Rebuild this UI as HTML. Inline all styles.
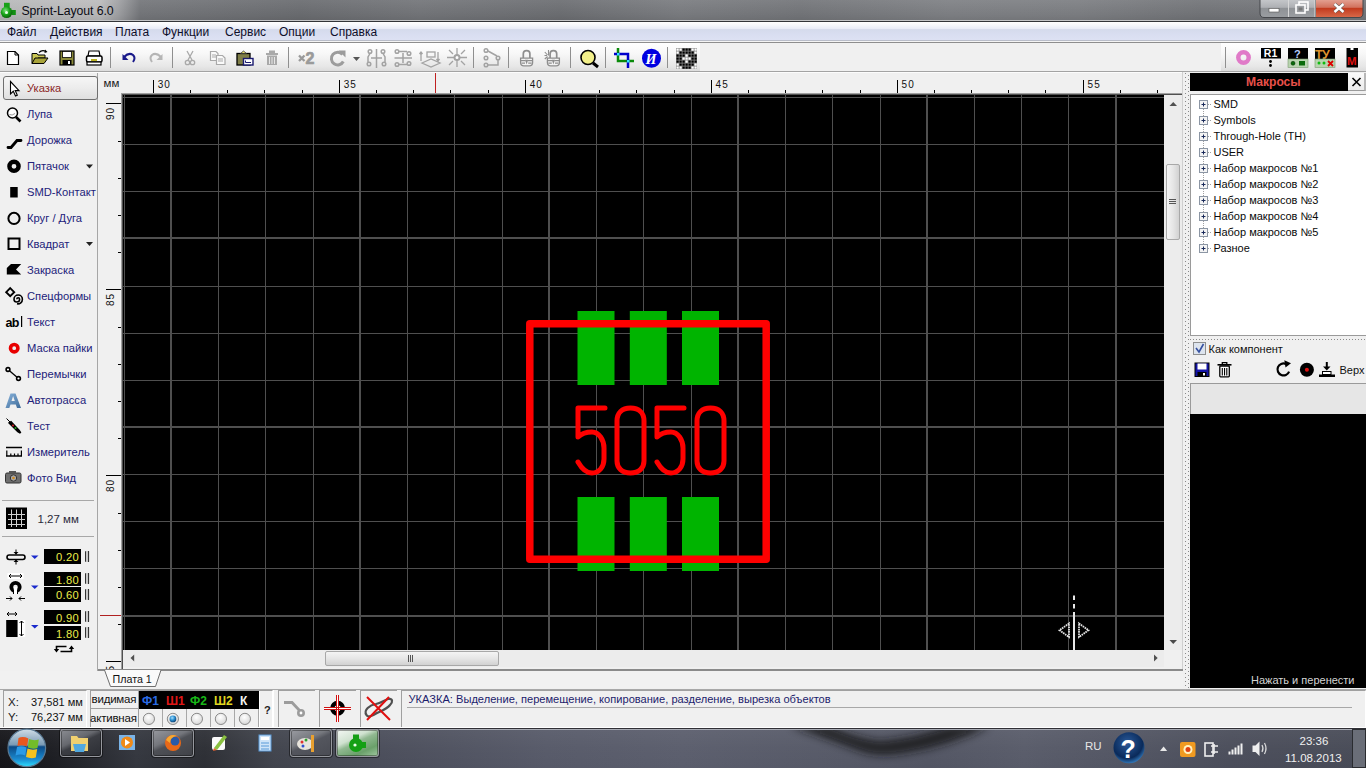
<!DOCTYPE html>
<html><head><meta charset="utf-8"><style>
*{box-sizing:border-box}
html,body{margin:0;padding:0}
body{width:1366px;height:768px;overflow:hidden;position:relative;background:#f0f0f0;font-family:"Liberation Sans",sans-serif;font-size:12px;color:#000}
.a{position:absolute}
svg{position:absolute;overflow:visible}
.t{position:absolute;white-space:nowrap;line-height:1}

#title{left:0;top:0;width:1366px;height:21px;background:linear-gradient(90deg,#b9babb 0,#bdbdbe 100px,#a2a3a6 118px,#76787c 140px,#6c6e72 300px,#75777b 420px,#6e7074 560px,#7c7e82 680px,#75777b 800px,#808286 950px,#7e8084 1080px,#74767a 1200px,#76787c 1366px)}
#menu{left:0;top:22px;width:1366px;height:18px;background:linear-gradient(#ffffff 0,#f4f6fb 20%,#e8ebf7 38%,#d5dbec 42%,#d9def1 70%,#dde1f3 100%)}
#menu .t{top:4.4px;font-size:12px;color:#0e0e2a}
.tbg{position:absolute;top:43px;height:28px;background:linear-gradient(#ffffff 0,#f7f7f7 40%,#e6e6e6 85%,#dcdcdc 100%)}
.sep{position:absolute;top:47px;width:1px;height:21px;background:#8f8f8f}

.lt{position:absolute;left:27px;font-size:11.2px;color:#22227a;white-space:nowrap;line-height:1}
.inp{position:absolute;left:44px;width:37px;height:14.5px;background:#000;color:#ecec4a;font-size:11.2px;text-align:right;padding-right:2px;line-height:17px;letter-spacing:0.3px}
.spin{position:absolute;left:85px;width:5px;height:11px;border-radius:1px;background:linear-gradient(90deg,#333 0,#333 1.5px,#c8c8c8 1.5px,#c8c8c8 3px,#333 3px,#333 4.5px,#ddd 4.5px)}

.rl{position:absolute;font-size:10px;color:#111;line-height:1;white-space:nowrap}

.ti{position:absolute;left:1213.5px;font-size:11px;color:#0a0a0a;white-space:nowrap;line-height:1}

.sb{position:absolute;border-top:1px solid #a0a0a0;border-left:1px solid #a0a0a0;border-right:1px solid #fff}
.tbb{position:absolute;top:729px;height:28px;border-radius:3px;border:1px solid #96989e;box-shadow:0 0 0 1px rgba(0,0,0,0.45),inset 0 0 0 1px rgba(0,0,0,0.35)}
</style></head><body>
<div class="a" id="title"></div><div class="a" style="left:0;top:0;width:1366px;height:21px;background:linear-gradient(rgba(255,255,255,0.06),rgba(0,0,0,0.04) 70%,rgba(0,0,0,0.1))"></div><div class="a" style="left:0;top:20px;width:1366px;height:1px;background:#c4c5c7"></div><div class="a" style="left:0;top:21px;width:1366px;height:1px;background:#333539"></div><svg width="20" height="20" style="left:0;top:0"><defs><radialGradient id="gi" cx="0.4" cy="0.35" r="0.7"><stop offset="0" stop-color="#7be07b"/><stop offset="0.5" stop-color="#18a418"/><stop offset="1" stop-color="#0a5a0a"/></radialGradient></defs><rect x="4" y="2.8" width="5.7" height="5" fill="#18a018"/><rect x="11.5" y="10" width="4.3" height="5" fill="#138f13"/><circle cx="6.6" cy="12.3" r="5.8" fill="url(#gi)"/><circle cx="6.5" cy="12.4" r="1.5" fill="#eaffea"/></svg><div class="t" style="left:21.5px;top:5px;font-size:12.3px;color:#0b0c14;letter-spacing:-0.1px">Sprint-Layout 6.0</div><svg width="106" height="19" style="left:1259px;top:0"><defs><linearGradient id="wb" x1="0" y1="0" x2="0" y2="1"><stop offset="0" stop-color="#c7c9cc"/><stop offset="0.45" stop-color="#aeb0b4"/><stop offset="0.5" stop-color="#8f9296"/><stop offset="1" stop-color="#9a9da1"/></linearGradient><linearGradient id="wc" x1="0" y1="0" x2="0" y2="1"><stop offset="0" stop-color="#e5a597"/><stop offset="0.45" stop-color="#d2725e"/><stop offset="0.5" stop-color="#c23a1e"/><stop offset="1" stop-color="#d96a4a"/></linearGradient></defs><path d="M1,-1 V13 Q1,17.5 5,17.5 H56.5 V-1 Z" fill="url(#wb)" stroke="#45474b" stroke-width="1"/><path d="M56.5,-1 V17.5 H100 Q104,17.5 104,13 V-1 Z" fill="url(#wc)" stroke="#45474b" stroke-width="1"/><path d="M29.5,0 V17" stroke="#d8d8d8" stroke-width="1"/><path d="M56,0 V17" stroke="#dddddd" stroke-width="1"/><rect x="10" y="8.5" width="10" height="3.5" fill="#fff" stroke="#555" stroke-width="0.6"/><rect x="40" y="2" width="9" height="8" fill="none" stroke="#fff" stroke-width="1.6"/><rect x="37" y="5" width="9" height="8" fill="#9a9da1" stroke="#fff" stroke-width="1.6"/><rect x="39.5" y="7.5" width="4" height="3" fill="#777"/><path d="M75.5,4 L84.5,12 M84.5,4 L75.5,12" stroke="#555" stroke-width="3.6"/><path d="M75.5,4 L84.5,12 M84.5,4 L75.5,12" stroke="#fff" stroke-width="2.4"/></svg><div class="a" id="menu"><span class="t" style="left:7px">Файл</span><span class="t" style="left:50px">Действия</span><span class="t" style="left:115px">Плата</span><span class="t" style="left:162px">Функции</span><span class="t" style="left:225px">Сервис</span><span class="t" style="left:279px">Опции</span><span class="t" style="left:330px">Справка</span></div><div class="a" style="left:0;top:40px;width:1366px;height:1px;background:#b9bdc9"></div><div class="a" style="left:0;top:41px;width:1366px;height:1px;background:#f4f4f4"></div><div class="a" style="left:0;top:42px;width:1366px;height:1px;background:#8e8e8e"></div><div class="a" style="left:0;top:71px;width:1366px;height:1px;background:#a3a3a3"></div><div class="tbg" style="left:0;width:700px"></div><div class="tbg" style="left:1221px;width:145px"></div><div class="sep" style="left:110px"></div><div class="sep" style="left:172px"></div><div class="sep" style="left:288px"></div><div class="sep" style="left:473px"></div><div class="sep" style="left:508px"></div><div class="sep" style="left:570px"></div><div class="sep" style="left:605px"></div><div class="sep" style="left:667px"></div><div class="sep" style="left:1225px"></div><svg width="1366" height="80" style="left:0;top:0"><path d="M7.5,51.5 H15 L18.5,55 V64.5 H7.5 Z" fill="#fff" stroke="#000" stroke-width="1.2"/><path d="M15,51.5 V55 H18.5" fill="none" stroke="#000" stroke-width="1"/><path d="M32,53.5 H37 L38,55 H45 V58 H38 L35,63.5 H32 Z" fill="#c9c653" stroke="#000" stroke-width="1"/><path d="M35,58 H48 L44,63.5 H32 Z" fill="#a8a33a" stroke="#000" stroke-width="1"/><path d="M39,52.5 Q42,49.5 46,51.5" fill="none" stroke="#000" stroke-width="1.2"/><path d="M45,49.5 L47.5,52 L44.5,53" fill="#000"/><rect x="60" y="51" width="14" height="14" fill="#8b8a3a" stroke="#000" stroke-width="1.2"/><rect x="62.5" y="51.5" width="9" height="6" fill="#fff" stroke="#000" stroke-width="0.8"/><rect x="62.5" y="60" width="9" height="5" fill="#000"/><rect x="68" y="61" width="2" height="3" fill="#fff"/><path d="M89,51 H99 L100,56 H88 Z" fill="#fff" stroke="#000" stroke-width="1.2"/><rect x="86.5" y="56" width="15.5" height="6" rx="1.5" fill="#fff" stroke="#000" stroke-width="1.5"/><rect x="87" y="62" width="14" height="3" fill="#fff" stroke="#000" stroke-width="1.2"/><rect x="91" y="59" width="6" height="2" fill="#b8b020"/><path d="M124,57 Q129,52 133,55 Q136,58 133,62" fill="none" stroke="#1a1a8a" stroke-width="2"/><path d="M122.5,54 L122.5,60 L128.5,60 Z" fill="#1a1a8a"/><path d="M161,57 Q156,52 152,55 Q149,58 152,62" fill="none" stroke="#b5b5b5" stroke-width="2"/><path d="M162.5,54 L162.5,60 L156.5,60 Z" fill="#b5b5b5"/><g stroke="#a9a9a9" stroke-width="1.3" fill="none"><path d="M187,51 L192,60 M193,51 L188,60"/><circle cx="187.5" cy="62.5" r="2.2"/><circle cx="192.5" cy="62.5" r="2.2"/></g><g fill="#fafafa" stroke="#a9a9a9" stroke-width="1.2"><path d="M210.5,51.5 H216 L218,53.5 V60.5 H210.5 Z"/><path d="M216.5,55.5 H222.5 L225,58 V64.5 H216.5 Z"/></g><g stroke="#a9a9a9" stroke-width="1"><path d="M212,55 H216 M212,57 H216 M218,59 H223 M218,61 H223"/></g><rect x="237" y="53.5" width="13" height="11.5" fill="#7f7e48" stroke="#000" stroke-width="1.3"/><path d="M240.5,53.5 L243.5,51 L246.5,53.5 Z" fill="#e8e070" stroke="#333" stroke-width="0.8"/><rect x="243.5" y="58.5" width="9.5" height="6.5" fill="#fff" stroke="#1a1a70" stroke-width="1.4"/><path d="M245.5,60.5 V62.5 H251" stroke="#1a1a70" stroke-width="1" fill="none"/><g fill="#a9a9a9"><rect x="266" y="53" width="12" height="2"/><rect x="269" y="50.5" width="6" height="2.5"/><rect x="267" y="55.5" width="10" height="9.5"/></g><g stroke="#e6e6e6" stroke-width="1"><path d="M269.5,57 V64 M272,57 V64 M274.5,57 V64"/></g><path d="M299,55.5 L304.5,61 M304.5,55.5 L299,61" stroke="#9a9a9a" stroke-width="2.3"/><text x="305.5" y="63.5" style="font-family:Liberation Sans;font-weight:bold;font-size:16px" fill="#9a9a9a" stroke="#9a9a9a" stroke-width="0.7">2</text><path d="M342.5,54.5 A6.3,6.3 0 1 0 343.3,61.5" fill="none" stroke="#9c9c9c" stroke-width="3"/><path d="M338.5,50.5 L345.5,50.5 L345.5,57.5 Z" fill="#9c9c9c"/><path d="M353,57 H360 L356.5,61 Z" fill="#555"/><g stroke="#a3a3a3" stroke-width="1.5" fill="none"><path d="M376.5,49 V68"/><circle cx="370" cy="51.5" r="1.8"/><circle cx="369" cy="64" r="1.8"/><circle cx="383" cy="51.5" r="1.8"/><circle cx="384" cy="64" r="1.8"/><path d="M370,53.5 L368,57 L368,62 M383,53.5 L385,57 L385,62 M371,58 H382"/></g><g stroke="#a3a3a3" stroke-width="1.5" fill="none"><path d="M394.5,58 H412"/><circle cx="397" cy="51.5" r="1.8"/><circle cx="409" cy="53.5" r="1.8"/><circle cx="397" cy="64.5" r="1.8"/><circle cx="409" cy="63.5" r="1.8"/><path d="M399,51.5 H407 M399,64.5 H407 M403,53 V63"/></g><g stroke="#a3a3a3" stroke-width="1.3" fill="none"><rect x="427" y="52" width="8" height="5"/><path d="M422,63 L431,59 L440,63 L431,67 Z M421,61 V52 M419.5,54 L421,52 L422.5,54 M438,52 V61 M436.5,59 L438,61 L439.5,59"/></g><g stroke="#a3a3a3" stroke-width="1.3" fill="none"><path d="M447,57.5 H467 M457,48 V67 M449,50 L453,54 M465,50 L461,54 M449,65 L453,61 M465,65 L461,61"/><circle cx="457" cy="57.5" r="2.5" fill="#fff" stroke-width="2"/></g><g stroke="#a3a3a3" stroke-width="1.5" fill="none"><circle cx="486" cy="50.5" r="1.8"/><circle cx="486" cy="58" r="1.8"/><circle cx="486" cy="65" r="1.8"/><circle cx="498" cy="58" r="1.8"/><path d="M488,51 L497,56 M498,60 V65 H488"/></g><g stroke="#8e8e8e" fill="none" transform="translate(0.0,0)"><path d="M523.3,58 V53.8 Q523.3,50.6 526.6,50.6 Q529.9,50.6 529.9,53.8 V58" stroke-width="1.7"/><path d="M520.6,58.2 H532.6 V62.5 Q532.6,65.8 529.3,65.8 H523.9 Q520.6,65.8 520.6,62.5 Z" stroke-width="1.3" fill="#f4f4f4"/><path d="M521,60.6 H525.5 M527.7,60.6 H532.2 M521.5,63.2 H525 M528.2,63.2 H531.7" stroke-width="1.2"/><path d="M525,59.8 H528.2 L526.6,64.5 Z" fill="#8e8e8e" stroke="none"/></g><g stroke="#8e8e8e" fill="none" transform="translate(26.8,0)"><path d="M523.3,58 V53.8 Q523.3,50.6 526.6,50.6 Q529.9,50.6 529.9,53.8 V58" stroke-width="1.7"/><path d="M520.6,58.2 H532.6 V62.5 Q532.6,65.8 529.3,65.8 H523.9 Q520.6,65.8 520.6,62.5 Z" stroke-width="1.3" fill="#f4f4f4"/><path d="M521,60.6 H525.5 M527.7,60.6 H532.2 M521.5,63.2 H525 M528.2,63.2 H531.7" stroke-width="1.2"/><path d="M525,59.8 H528.2 L526.6,64.5 Z" fill="#8e8e8e" stroke="none"/></g><path d="M548.5,50 V55.5 M544.8,52 L547.5,55 M544.8,59 L547.5,56.5 M544.5,55.5 H547" stroke="#8e8e8e" stroke-width="1.1"/><circle cx="588" cy="57.5" r="7" fill="#f3f08a" stroke="#000" stroke-width="1.6"/><path d="M593,63 L598,67" stroke="#000" stroke-width="3"/><g stroke-width="2.5"><path d="M618,48 V61 H634" stroke="#0a8a0a" fill="none"/><path d="M614,54 H628 V68" stroke="#0000cc" fill="none"/></g><rect x="617" y="53" width="2.5" height="2.5" fill="#33e6ff"/><rect x="627" y="60" width="2.5" height="2.5" fill="#33e6ff"/><circle cx="651.5" cy="58.3" r="9.5" fill="#0000e0"/><text x="645.5" y="63.5" font-family="Liberation Serif" font-weight="bold" font-style="italic" font-size="14" fill="#fff">И</text><rect x="676" y="48" width="21" height="21" fill="#888"/><rect x="676.5" y="48.5" width="2.2" height="2.2" fill="#fff"/><rect x="679.5" y="48.5" width="2.2" height="2.2" fill="#fff"/><rect x="682.5" y="48.5" width="2.2" height="2.2" fill="#000"/><rect x="685.5" y="48.5" width="2.2" height="2.2" fill="#000"/><rect x="688.5" y="48.5" width="2.2" height="2.2" fill="#000"/><rect x="691.5" y="48.5" width="2.2" height="2.2" fill="#fff"/><rect x="694.5" y="48.5" width="2.2" height="2.2" fill="#fff"/><rect x="676.5" y="51.5" width="2.2" height="2.2" fill="#fff"/><rect x="679.5" y="51.5" width="2.2" height="2.2" fill="#000"/><rect x="682.5" y="51.5" width="2.2" height="2.2" fill="#000"/><rect x="685.5" y="51.5" width="2.2" height="2.2" fill="#000"/><rect x="688.5" y="51.5" width="2.2" height="2.2" fill="#000"/><rect x="691.5" y="51.5" width="2.2" height="2.2" fill="#000"/><rect x="694.5" y="51.5" width="2.2" height="2.2" fill="#fff"/><rect x="676.5" y="54.5" width="2.2" height="2.2" fill="#000"/><rect x="679.5" y="54.5" width="2.2" height="2.2" fill="#000"/><rect x="682.5" y="54.5" width="2.2" height="2.2" fill="#000"/><rect x="685.5" y="54.5" width="2.2" height="2.2" fill="#fff"/><rect x="688.5" y="54.5" width="2.2" height="2.2" fill="#000"/><rect x="691.5" y="54.5" width="2.2" height="2.2" fill="#000"/><rect x="694.5" y="54.5" width="2.2" height="2.2" fill="#000"/><rect x="676.5" y="57.5" width="2.2" height="2.2" fill="#000"/><rect x="679.5" y="57.5" width="2.2" height="2.2" fill="#000"/><rect x="682.5" y="57.5" width="2.2" height="2.2" fill="#fff"/><rect x="685.5" y="57.5" width="2.2" height="2.2" fill="#fff"/><rect x="688.5" y="57.5" width="2.2" height="2.2" fill="#fff"/><rect x="691.5" y="57.5" width="2.2" height="2.2" fill="#000"/><rect x="694.5" y="57.5" width="2.2" height="2.2" fill="#000"/><rect x="676.5" y="60.5" width="2.2" height="2.2" fill="#000"/><rect x="679.5" y="60.5" width="2.2" height="2.2" fill="#000"/><rect x="682.5" y="60.5" width="2.2" height="2.2" fill="#000"/><rect x="685.5" y="60.5" width="2.2" height="2.2" fill="#fff"/><rect x="688.5" y="60.5" width="2.2" height="2.2" fill="#000"/><rect x="691.5" y="60.5" width="2.2" height="2.2" fill="#000"/><rect x="694.5" y="60.5" width="2.2" height="2.2" fill="#000"/><rect x="676.5" y="63.5" width="2.2" height="2.2" fill="#fff"/><rect x="679.5" y="63.5" width="2.2" height="2.2" fill="#000"/><rect x="682.5" y="63.5" width="2.2" height="2.2" fill="#000"/><rect x="685.5" y="63.5" width="2.2" height="2.2" fill="#000"/><rect x="688.5" y="63.5" width="2.2" height="2.2" fill="#000"/><rect x="691.5" y="63.5" width="2.2" height="2.2" fill="#000"/><rect x="694.5" y="63.5" width="2.2" height="2.2" fill="#fff"/><rect x="676.5" y="66.5" width="2.2" height="2.2" fill="#fff"/><rect x="679.5" y="66.5" width="2.2" height="2.2" fill="#fff"/><rect x="682.5" y="66.5" width="2.2" height="2.2" fill="#000"/><rect x="685.5" y="66.5" width="2.2" height="2.2" fill="#000"/><rect x="688.5" y="66.5" width="2.2" height="2.2" fill="#000"/><rect x="691.5" y="66.5" width="2.2" height="2.2" fill="#fff"/><rect x="694.5" y="66.5" width="2.2" height="2.2" fill="#fff"/><circle cx="1243.5" cy="57.5" r="5.2" fill="none" stroke="#e07ac8" stroke-width="4.5"/><rect x="1261" y="48" width="20" height="10.5" fill="#000"/><text x="1263.8" y="57" style="font-family:Liberation Sans;font-weight:bold;font-size:10.5px" fill="#fff">R1</text><circle cx="1270.5" cy="61.5" r="1.4" fill="#000"/><circle cx="1270.5" cy="65.5" r="1.4" fill="#000"/><rect x="1288" y="48" width="20" height="11" fill="#000"/><text x="1294" y="57.5" style="font-family:Liberation Sans;font-weight:bold;font-size:11px" fill="#b8cfff">?</text><rect x="1288" y="59" width="20" height="8.5" fill="#b9d4b0" stroke="#7a9a70" stroke-width="0.6"/><circle cx="1293" cy="63.3" r="2" fill="#0a6a0a" stroke="#003300" stroke-width="0.5"/><rect x="1299" y="61" width="6" height="4.5" fill="#0a6a0a"/><rect x="1315" y="48" width="20" height="11" fill="#000"/><text x="1315" y="58.8" style="font-family:Liberation Sans;font-weight:bold;font-size:12.5px;letter-spacing:-0.6px" fill="#dc922e">ТУ</text><rect x="1315" y="59" width="20" height="8.5" fill="#b9d4b0" stroke="#7a9a70" stroke-width="0.6"/><circle cx="1319" cy="63" r="1.5" fill="#11bb11"/><circle cx="1324" cy="63" r="1.5" fill="#11bb11"/><path d="M1328,61 L1333,66 M1333,61 L1328,66" stroke="#dd0000" stroke-width="1.8"/><rect x="1346.5" y="48" width="11.5" height="19.5" fill="#000"/><rect x="1350.5" y="48" width="3" height="2" fill="#fff"/><text x="1347" y="65" style="font-family:Liberation Sans;font-weight:bold;font-size:11.5px" fill="#e01010">M</text></svg><div class="a" style="left:97px;top:72px;width:1px;height:616px;background:#a6a6a6"></div><div class="a" style="left:3px;top:76px;width:95px;height:24px;border:1px solid #6f6f6f;border-radius:3px;background:linear-gradient(#f6f6f6,#ececec 50%,#dfdfdf)"></div><div class="lt" style="top:82.9px;color:#8a2626">Указка</div><div class="lt" style="top:108.9px;color:#22227a">Лупа</div><div class="lt" style="top:134.9px;color:#22227a">Дорожка</div><div class="lt" style="top:160.9px;color:#22227a">Пятачок</div><div class="lt" style="top:186.9px;color:#22227a">SMD-Контакт</div><div class="lt" style="top:212.9px;color:#22227a">Круг / Дуга</div><div class="lt" style="top:238.9px;color:#22227a">Квадрат</div><div class="lt" style="top:264.9px;color:#22227a">Закраска</div><div class="lt" style="top:290.9px;color:#22227a">Спецформы</div><div class="lt" style="top:316.9px;color:#22227a">Текст</div><div class="lt" style="top:342.9px;color:#22227a">Маска пайки</div><div class="lt" style="top:368.9px;color:#22227a">Перемычки</div><div class="lt" style="top:394.9px;color:#22227a">Автотрасса</div><div class="lt" style="top:420.9px;color:#22227a">Тест</div><div class="lt" style="top:446.9px;color:#22227a">Измеритель</div><div class="lt" style="top:472.9px;color:#22227a">Фото Вид</div><div class="a" style="left:2px;top:500px;width:92px;height:1px;background:#a8a8a8"></div><div class="a" style="left:2px;top:536px;width:92px;height:1px;background:#a8a8a8"></div><div class="t" style="left:37.5px;top:513.5px;font-size:11.5px;color:#2a2a3a">1,27 мм</div><svg width="100" height="700" style="left:0;top:0"><path d="M10.5,81.5 V94 L13.3,91.3 L15.5,96 L17.3,95.2 L15.2,90.6 L19,90.6 Z" fill="#fff" stroke="#000" stroke-width="1.1" stroke-linejoin="miter"/><circle cx="12.5" cy="113" r="5" fill="#fff" stroke="#000" stroke-width="1.5"/><path d="M9.5,114.5 Q12,116 15,113.5" stroke="#999" stroke-width="1" fill="none"/><path d="M16,117 L20.5,121.5" stroke="#000" stroke-width="2.6"/><path d="M8,147.5 H11 L17,140.5 H21" stroke="#000" stroke-width="2.8" fill="none" stroke-linecap="round"/><circle cx="14" cy="166.3" r="4.6" fill="none" stroke="#000" stroke-width="4.4"/><path d="M86,164.5 H93 L89.5,168.5 Z" fill="#222"/><rect x="10.2" y="187" width="7.5" height="10.5" fill="#000"/><circle cx="14" cy="218.4" r="5.6" fill="none" stroke="#000" stroke-width="2"/><rect x="8.5" y="238.5" width="11" height="10.5" fill="none" stroke="#000" stroke-width="2"/><path d="M86,242 H93 L89.5,246 Z" fill="#222"/><path d="M11,264 H21.2 L16,269.5 L21.2,274.5 H6.8 V268 Z" fill="#000"/><path d="M10.2,288.2 L14.2,292.2 L10.2,296.2 L6.2,292.2 Z" fill="none" stroke="#000" stroke-width="1.9"/><path d="M16.8,299.2 A1.4,1.4 0 0 1 19.6,299.2 A2.8,2.8 0 0 1 14,299.2 A4.2,4.2 0 0 1 22.4,299.2 A4.6,4.6 0 0 1 17,303.8" fill="none" stroke="#000" stroke-width="1.6"/><text x="5.5" y="326.5" font-family="Liberation Sans" font-weight="bold"  font-size="12.5" fill="#000" letter-spacing="-0.6">ab</text><rect x="21" y="316" width="1.2" height="11" fill="#000"/><circle cx="14.2" cy="348.2" r="3.7" fill="none" stroke="#e80000" stroke-width="3.6"/><path d="M8,369.5 L18.5,378.5" stroke="#000" stroke-width="1.3"/><circle cx="8" cy="369.5" r="1.9" fill="#fff" stroke="#000" stroke-width="1.6"/><circle cx="18.5" cy="378.5" r="1.9" fill="#fff" stroke="#000" stroke-width="1.6"/><defs><linearGradient id="ag" x1="0" y1="0" x2="1" y2="1"><stop offset="0" stop-color="#8ab4dc"/><stop offset="1" stop-color="#3d6a98"/></linearGradient></defs><path d="M10.5,393.5 H15.5 L21,408 H17 L15.8,404.5 H10.5 L9.3,408 H5.5 Z M11.5,401 H14.8 L13.1,396 Z" fill="url(#ag)" fill-rule="evenodd"/><path d="M6.5,418.5 L21,433" stroke="#000" stroke-width="1"/><path d="M9.5,423 L18,431.5 L20.5,433 L19,430.5 L11,422 Z" fill="#000" stroke="#000" stroke-width="2"/><circle cx="13" cy="425.5" r="1" fill="#e02020"/><circle cx="15.5" cy="428" r="1" fill="#20b020"/><path d="M6,447.5 H22 M6,456 H22" stroke="#000" stroke-width="1.3"/><path d="M6.8,456 V450.5 M10.8,456 V453.5 M14.5,456 V453.5 M18,456 V453.5 M21.4,456 V450.5" stroke="#000" stroke-width="1.2"/><rect x="5.5" y="473" width="15.5" height="10" rx="1.5" fill="#6e6e6e" stroke="#333" stroke-width="1"/><rect x="9" y="471" width="7" height="2.5" fill="#555"/><circle cx="13.5" cy="478" r="3.2" fill="#a8a8a8" stroke="#333" stroke-width="1"/><circle cx="13.5" cy="478" r="1.3" fill="#d08a20"/><rect x="6" y="507.5" width="21" height="21.5" fill="#000"/><path d="M8,514.5 H25 M8,519.5 H25 M8,524.5 H25 M11.5,509.5 V527 M16.5,509.5 V527 M21.5,509.5 V527" stroke="#d0d0d0" stroke-width="1"/><rect x="7" y="555" width="18" height="4.5" rx="2.2" fill="none" stroke="#000" stroke-width="1.6"/><path d="M16,549.5 V554.5 M16,559.5 V564.5" stroke="#000" stroke-width="1"/><path d="M13.5,552 L16,554.5 L18.5,552 Z M13.5,562 L16,559.5 L18.5,562 Z" fill="#000"/><rect x="7.5" y="573" width="16" height="6" fill="#fff"/><path d="M9,576 H22" stroke="#000" stroke-width="1"/><path d="M11,574 L9,576 L11,578 M20,574 L22,576 L20,578" stroke="#000" stroke-width="1" fill="none"/><circle cx="15.5" cy="587" r="4.2" fill="none" stroke="#000" stroke-width="3.8"/><rect x="13.8" y="587" width="3.4" height="7" fill="#fff"/><rect x="13" y="590" width="1" height="4" fill="#000"/><rect x="17" y="590" width="1" height="4" fill="#000"/><path d="M6,598.5 H12 M19,598.5 H25" stroke="#000" stroke-width="1"/><path d="M10,596.5 L12,598.5 L10,600.5 M21,596.5 L19,598.5 L21,600.5" stroke="#000" stroke-width="1" fill="none"/><path d="M7,614 H17 M9,612 L7,614 L9,616 M15,612 L17,614 L15,616" stroke="#000" stroke-width="1" fill="none"/><rect x="6.2" y="620" width="11.5" height="17" fill="#000"/><rect x="17.8" y="620" width="7.5" height="17" fill="#fff"/><path d="M21.5,621 V636 M19.5,623 L21.5,621 L23.5,623 M19.5,634 L21.5,636 L23.5,634" stroke="#000" stroke-width="1" fill="none"/><path d="M31,555.5 H38.5 L34.75,559.0 Z" fill="#1a2acc"/><path d="M31,585.5 H38.5 L34.75,589.0 Z" fill="#1a2acc"/><path d="M31,625.0 H38.5 L34.75,628.5 Z" fill="#1a2acc"/><path d="M66.5,646.5 H56.5 V649.5 M60.5,651.5 H71.5 V648.5" stroke="#000" stroke-width="1.6" fill="none"/><path d="M53.8,649 H59.2 L56.5,652.5 Z M68.8,649 H74.2 L71.5,645.5 Z" fill="#000"/></svg><div class="inp" style="top:549.3px">0.20</div><div class="spin" style="top:550.8px"></div><div class="inp" style="top:571.5px">1.80</div><div class="spin" style="top:573.0px"></div><div class="inp" style="top:587.4px">0.60</div><div class="spin" style="top:588.9px"></div><div class="inp" style="top:609.5px">0.90</div><div class="spin" style="top:611.0px"></div><div class="inp" style="top:625.7px">1.80</div><div class="spin" style="top:627.2px"></div><div class="a" style="left:98px;top:72px;width:1085px;height:598px;background:#f0f0f0"></div><div class="a" style="left:0;top:72px;width:1183px;height:1px;background:#fcfcfc"></div><div class="a" style="left:98px;top:669px;width:1085px;height:2px;background:#8a8a8a"></div><div class="a" style="left:1182px;top:72px;width:1px;height:598px;background:#d0d0d0"></div><div class="a" style="left:121px;top:93px;width:1px;height:576px;background:#a0a0a0"></div><div class="a" style="left:122px;top:93px;width:1px;height:576px;background:#505050"></div><div class="a" style="left:121px;top:93px;width:1061px;height:1px;background:#a0a0a0"></div><div class="a" style="left:122px;top:94px;width:1060px;height:1px;background:#505050"></div><div class="a" style="left:123px;top:95px;width:1041px;height:555px;background:#000"></div><svg width="1366" height="768" viewBox="0 0 1366 768" style="left:0;top:0"><rect x="124" y="95" width="1" height="555" fill="#4f4f4f"/><rect x="170" y="95" width="2" height="555" fill="#4f4f4f"/><rect x="218" y="95" width="1" height="555" fill="#4f4f4f"/><rect x="265" y="95" width="1" height="555" fill="#4f4f4f"/><rect x="313" y="95" width="1" height="555" fill="#4f4f4f"/><rect x="359" y="95" width="2" height="555" fill="#4f4f4f"/><rect x="407" y="95" width="1" height="555" fill="#4f4f4f"/><rect x="454" y="95" width="1" height="555" fill="#4f4f4f"/><rect x="502" y="95" width="1" height="555" fill="#4f4f4f"/><rect x="548" y="95" width="2" height="555" fill="#4f4f4f"/><rect x="596" y="95" width="1" height="555" fill="#4f4f4f"/><rect x="643" y="95" width="1" height="555" fill="#4f4f4f"/><rect x="691" y="95" width="1" height="555" fill="#4f4f4f"/><rect x="737" y="95" width="2" height="555" fill="#4f4f4f"/><rect x="785" y="95" width="1" height="555" fill="#4f4f4f"/><rect x="832" y="95" width="1" height="555" fill="#4f4f4f"/><rect x="880" y="95" width="1" height="555" fill="#4f4f4f"/><rect x="926" y="95" width="2" height="555" fill="#4f4f4f"/><rect x="974" y="95" width="1" height="555" fill="#4f4f4f"/><rect x="1021" y="95" width="1" height="555" fill="#4f4f4f"/><rect x="1068" y="95" width="1" height="555" fill="#4f4f4f"/><rect x="1115" y="95" width="2" height="555" fill="#4f4f4f"/><rect x="123" y="97" width="1041" height="1" fill="#4f4f4f"/><rect x="123" y="144" width="1041" height="1" fill="#4f4f4f"/><rect x="123" y="191" width="1041" height="1" fill="#4f4f4f"/><rect x="123" y="237" width="1041" height="2" fill="#4f4f4f"/><rect x="123" y="286" width="1041" height="1" fill="#4f4f4f"/><rect x="123" y="333" width="1041" height="1" fill="#4f4f4f"/><rect x="123" y="380" width="1041" height="1" fill="#4f4f4f"/><rect x="123" y="426" width="1041" height="2" fill="#4f4f4f"/><rect x="123" y="474" width="1041" height="1" fill="#4f4f4f"/><rect x="123" y="521" width="1041" height="1" fill="#4f4f4f"/><rect x="123" y="568" width="1041" height="1" fill="#4f4f4f"/><rect x="123" y="615" width="1041" height="2" fill="#4f4f4f"/><rect x="577.5" y="311" width="37" height="74" fill="#00b400"/><rect x="577.5" y="497" width="37" height="74" fill="#00b400"/><rect x="629.8" y="311" width="37" height="74" fill="#00b400"/><rect x="629.8" y="497" width="37" height="74" fill="#00b400"/><rect x="682.0" y="311" width="37" height="74" fill="#00b400"/><rect x="682.0" y="497" width="37" height="74" fill="#00b400"/><rect x="529.8" y="323.7" width="236.4" height="235.5" fill="none" stroke="#ff0000" stroke-width="7.5" stroke-linejoin="round"/><path d="M605,408 H578 V437 C582,433 586,432 592,432 C599,432 604,440 604,448 V459 C604,467 599,473 592,473 C586,473 582,469 578,462 M617,421 C617,413 622,408 630.5,408 C639,408 644,413 644,421 V461 C644,468 639,473 630.5,473 C622,473 617,468 617,461 Z M684,408 H657 V437 C661,433 665,432 671,432 C678,432 683,440 683,448 V459 C683,467 678,473 671,473 C665,473 661,469 657,462 M697,421 C697,413 702,408 710.5,408 C719,408 724,413 724,421 V461 C724,468 719,473 710.5,473 C702,473 697,468 697,461 Z" fill="none" stroke="#ff0000" stroke-width="5" stroke-linecap="round" stroke-linejoin="round"/><rect x="1073" y="595.5" width="2" height="4.5" fill="#e8e8e8"/><rect x="1073" y="604" width="2" height="4.5" fill="#e8e8e8"/><rect x="1073" y="612" width="2" height="38" fill="#e8e8e8"/><path d="M1069,623.5 L1059.5,630.2 L1069,637 Z M1079,623.5 L1088.5,630.2 L1079,637 Z" fill="none" stroke="#e4e4e4" stroke-width="1.8" stroke-dasharray="1.6,0.7"/></svg><svg width="1366" height="768" viewBox="0 0 1366 768" style="left:0;top:0"><rect x="153" y="80" width="1" height="13" fill="#000"/><rect x="190" y="90" width="1" height="3" fill="#000"/><rect x="227" y="90" width="1" height="3" fill="#000"/><rect x="264" y="90" width="1" height="3" fill="#000"/><rect x="302" y="90" width="1" height="3" fill="#000"/><rect x="339" y="80" width="1" height="13" fill="#000"/><rect x="376" y="90" width="1" height="3" fill="#000"/><rect x="413" y="90" width="1" height="3" fill="#000"/><rect x="450" y="90" width="1" height="3" fill="#000"/><rect x="488" y="90" width="1" height="3" fill="#000"/><rect x="525" y="80" width="1" height="13" fill="#000"/><rect x="562" y="90" width="1" height="3" fill="#000"/><rect x="599" y="90" width="1" height="3" fill="#000"/><rect x="636" y="90" width="1" height="3" fill="#000"/><rect x="674" y="90" width="1" height="3" fill="#000"/><rect x="711" y="80" width="1" height="13" fill="#000"/><rect x="748" y="90" width="1" height="3" fill="#000"/><rect x="785" y="90" width="1" height="3" fill="#000"/><rect x="822" y="90" width="1" height="3" fill="#000"/><rect x="860" y="90" width="1" height="3" fill="#000"/><rect x="897" y="80" width="1" height="13" fill="#000"/><rect x="934" y="90" width="1" height="3" fill="#000"/><rect x="971" y="90" width="1" height="3" fill="#000"/><rect x="1008" y="90" width="1" height="3" fill="#000"/><rect x="1045" y="90" width="1" height="3" fill="#000"/><rect x="1083" y="80" width="1" height="13" fill="#000"/><rect x="1120" y="90" width="1" height="3" fill="#000"/><rect x="1157" y="90" width="1" height="3" fill="#000"/><rect x="106" y="103" width="15" height="1" fill="#000"/><rect x="118" y="141" width="3" height="1" fill="#000"/><rect x="118" y="178" width="3" height="1" fill="#000"/><rect x="118" y="215" width="3" height="1" fill="#000"/><rect x="118" y="252" width="3" height="1" fill="#000"/><rect x="106" y="289" width="15" height="1" fill="#000"/><rect x="118" y="327" width="3" height="1" fill="#000"/><rect x="118" y="364" width="3" height="1" fill="#000"/><rect x="118" y="401" width="3" height="1" fill="#000"/><rect x="118" y="438" width="3" height="1" fill="#000"/><rect x="106" y="475" width="15" height="1" fill="#000"/><rect x="118" y="513" width="3" height="1" fill="#000"/><rect x="118" y="550" width="3" height="1" fill="#000"/><rect x="118" y="587" width="3" height="1" fill="#000"/><rect x="118" y="624" width="3" height="1" fill="#000"/><rect x="106" y="661" width="15" height="1" fill="#000"/><rect x="435" y="73" width="1" height="20" fill="#c02020"/><rect x="100" y="615" width="21" height="1" fill="#b02020"/></svg><div class="rl" style="left:103.5px;top:78.3px;font-size:11.5px;letter-spacing:0.1px;color:#1a1a22">мм</div><div class="rl" style="left:157.8px;top:80.2px;letter-spacing:1px">30</div><div class="rl" style="left:343.8px;top:80.2px;letter-spacing:1px">35</div><div class="rl" style="left:529.7px;top:80.2px;letter-spacing:1px">40</div><div class="rl" style="left:715.6px;top:80.2px;letter-spacing:1px">45</div><div class="rl" style="left:901.6px;top:80.2px;letter-spacing:1px">50</div><div class="rl" style="left:1087.6px;top:80.2px;letter-spacing:1px">55</div><div class="rl" style="left:106.0px;top:119.9px;transform:rotate(-90deg);transform-origin:0 0;letter-spacing:1px">90</div><div class="rl" style="left:106.0px;top:305.9px;transform:rotate(-90deg);transform-origin:0 0;letter-spacing:1px">85</div><div class="rl" style="left:106.0px;top:491.9px;transform:rotate(-90deg);transform-origin:0 0;letter-spacing:1px">80</div><div class="rl" style="left:106.0px;top:677.9px;transform:rotate(-90deg);transform-origin:0 0;letter-spacing:1px">75</div><div class="a" style="left:98px;top:669px;width:1085px;height:2px;background:#8a8a8a"></div><div class="a" style="left:1164px;top:95px;width:18px;height:555px;background:#ececec"></div><div class="a" style="left:123px;top:650px;width:1041px;height:17px;background:#ececec"></div><div class="a" style="left:1164px;top:650px;width:18px;height:17px;background:#f0f0f0"></div><div class="a" style="left:1166px;top:164px;width:14px;height:76px;border:1px solid #a8a8a8;border-radius:2px;background:linear-gradient(90deg,#f4f4f4,#e6e6e6 50%,#d2d2d2)"></div><div class="a" style="left:325px;top:651px;width:174px;height:15px;border:1px solid #a8a8a8;border-radius:2px;background:linear-gradient(#f4f4f4,#e6e6e6 50%,#d2d2d2)"></div><svg width="1366" height="768" viewBox="0 0 1366 768" style="left:0;top:0"><path d="M1169.5,106 L1173.25,102 L1177,106 Z" fill="#505050"/><path d="M1169.5,640 H1177 L1173.25,644 Z" fill="#4a4a4a"/><path d="M130.5,658 L134.2,654.6 V661.4 Z" fill="#505050"/><path d="M1157.7,658 L1154,654.6 V661.4 Z" fill="#505050"/><path d="M1169,199.5 H1176 M1169,201.5 H1176 M1169,203.5 H1176" stroke="#555" stroke-width="1"/><path d="M408.5,655 V662 M410.5,655 V662 M412.5,655 V662" stroke="#555" stroke-width="1"/></svg><div class="a" style="left:0;top:671px;width:1183px;height:17px;background:#f1f1f1"></div><svg width="200" height="30" viewBox="95 665 200 30" style="left:95px;top:665px"><path d="M104.5,670 L110.5,686.5 H155.5 L161,670" fill="#fafafa" stroke="#6e6e6e" stroke-width="1"/></svg><div class="t" style="left:112.5px;top:673.8px;font-size:10.7px;color:#111">Плата 1</div><div class="a" style="left:1183px;top:72px;width:7px;height:616px;background:#f0f0f0"></div><div class="a" style="left:1185px;top:73px;width:1px;height:615px;background:repeating-linear-gradient(#8a8a8a 0,#8a8a8a 1px,transparent 1px,transparent 4px)"></div><div class="a" style="left:1188px;top:75px;width:1px;height:613px;background:repeating-linear-gradient(#8a8a8a 0,#8a8a8a 1px,transparent 1px,transparent 4px)"></div><div class="a" style="left:1190px;top:73px;width:176px;height:18px;background:#000"></div><div class="t" style="left:1246px;top:76px;font-size:12.1px;font-weight:bold;color:#e8504a">Макросы</div><div class="a" style="left:1348px;top:73px;width:18px;height:18px;background:linear-gradient(#fafafa,#ececec);border-right:2px solid #b8b8b8;border-bottom:1px solid #9a9a9a"></div><svg width="20" height="20" style="left:1348px;top:73px"><path d="M4.5,5 L12.5,13 M12.5,5 L4.5,13" stroke="#000" stroke-width="1.6"/></svg><div class="a" style="left:1190px;top:94px;width:176px;height:242px;background:#fff;border:1px solid #9a9a9a;border-right:none"></div><div class="ti" style="top:99.0px">SMD</div><div class="ti" style="top:115.0px">Symbols</div><div class="ti" style="top:131.0px">Through-Hole (TH)</div><div class="ti" style="top:147.0px">USER</div><div class="ti" style="top:163.0px">Набор макросов №1</div><div class="ti" style="top:179.0px">Набор макросов №2</div><div class="ti" style="top:195.0px">Набор макросов №3</div><div class="ti" style="top:211.0px">Набор макросов №4</div><div class="ti" style="top:227.0px">Набор макросов №5</div><div class="ti" style="top:243.0px">Разное</div><svg width="1366" height="768" viewBox="0 0 1366 768" style="left:0;top:0"><path d="M1203.5,109 V245" stroke="#a0a0a0" stroke-width="1" stroke-dasharray="1,1"/><rect x="1199.5" y="100.5" width="8" height="8" fill="#f4f4f4" stroke="#8c96a4" stroke-width="1"/><path d="M1201.5,104.5 H1205.5 M1203.5,102.5 V106.5" stroke="#1a2a5a" stroke-width="1"/><path d="M1208,104.5 H1212" stroke="#a0a0a0" stroke-width="1" stroke-dasharray="1,1"/><rect x="1199.5" y="116.5" width="8" height="8" fill="#f4f4f4" stroke="#8c96a4" stroke-width="1"/><path d="M1201.5,120.5 H1205.5 M1203.5,118.5 V122.5" stroke="#1a2a5a" stroke-width="1"/><path d="M1208,120.5 H1212" stroke="#a0a0a0" stroke-width="1" stroke-dasharray="1,1"/><rect x="1199.5" y="132.5" width="8" height="8" fill="#f4f4f4" stroke="#8c96a4" stroke-width="1"/><path d="M1201.5,136.5 H1205.5 M1203.5,134.5 V138.5" stroke="#1a2a5a" stroke-width="1"/><path d="M1208,136.5 H1212" stroke="#a0a0a0" stroke-width="1" stroke-dasharray="1,1"/><rect x="1199.5" y="148.5" width="8" height="8" fill="#f4f4f4" stroke="#8c96a4" stroke-width="1"/><path d="M1201.5,152.5 H1205.5 M1203.5,150.5 V154.5" stroke="#1a2a5a" stroke-width="1"/><path d="M1208,152.5 H1212" stroke="#a0a0a0" stroke-width="1" stroke-dasharray="1,1"/><rect x="1199.5" y="164.5" width="8" height="8" fill="#f4f4f4" stroke="#8c96a4" stroke-width="1"/><path d="M1201.5,168.5 H1205.5 M1203.5,166.5 V170.5" stroke="#1a2a5a" stroke-width="1"/><path d="M1208,168.5 H1212" stroke="#a0a0a0" stroke-width="1" stroke-dasharray="1,1"/><rect x="1199.5" y="180.5" width="8" height="8" fill="#f4f4f4" stroke="#8c96a4" stroke-width="1"/><path d="M1201.5,184.5 H1205.5 M1203.5,182.5 V186.5" stroke="#1a2a5a" stroke-width="1"/><path d="M1208,184.5 H1212" stroke="#a0a0a0" stroke-width="1" stroke-dasharray="1,1"/><rect x="1199.5" y="196.5" width="8" height="8" fill="#f4f4f4" stroke="#8c96a4" stroke-width="1"/><path d="M1201.5,200.5 H1205.5 M1203.5,198.5 V202.5" stroke="#1a2a5a" stroke-width="1"/><path d="M1208,200.5 H1212" stroke="#a0a0a0" stroke-width="1" stroke-dasharray="1,1"/><rect x="1199.5" y="212.5" width="8" height="8" fill="#f4f4f4" stroke="#8c96a4" stroke-width="1"/><path d="M1201.5,216.5 H1205.5 M1203.5,214.5 V218.5" stroke="#1a2a5a" stroke-width="1"/><path d="M1208,216.5 H1212" stroke="#a0a0a0" stroke-width="1" stroke-dasharray="1,1"/><rect x="1199.5" y="228.5" width="8" height="8" fill="#f4f4f4" stroke="#8c96a4" stroke-width="1"/><path d="M1201.5,232.5 H1205.5 M1203.5,230.5 V234.5" stroke="#1a2a5a" stroke-width="1"/><path d="M1208,232.5 H1212" stroke="#a0a0a0" stroke-width="1" stroke-dasharray="1,1"/><rect x="1199.5" y="244.5" width="8" height="8" fill="#f4f4f4" stroke="#8c96a4" stroke-width="1"/><path d="M1201.5,248.5 H1205.5 M1203.5,246.5 V250.5" stroke="#1a2a5a" stroke-width="1"/><path d="M1208,248.5 H1212" stroke="#a0a0a0" stroke-width="1" stroke-dasharray="1,1"/><path d="M1190,339.5 H1366" stroke="#8a8a8a" stroke-width="1" stroke-dasharray="1,2"/><rect x="1193.5" y="342.5" width="12" height="12" fill="#dde4ee" stroke="#8e8f8f" stroke-width="1"/><path d="M1196,348 L1199,352 L1203.5,344" stroke="#3550a0" stroke-width="1.6" fill="none"/><rect x="1195" y="363" width="14" height="13.5" fill="#1414a8" stroke="#000" stroke-width="1"/><rect x="1197.5" y="363.5" width="9" height="6" fill="#fff"/><rect x="1197.5" y="372" width="9" height="4.5" fill="#000"/><rect x="1203" y="373" width="2" height="2.5" fill="#fff"/><g fill="#fff" stroke="#000" stroke-width="1.3"><rect x="1219.8" y="366" width="9.5" height="10.8" rx="0.8"/><path d="M1217.5,364.8 H1231.5" fill="none" stroke-width="1.6"/><path d="M1222.3,364.5 V362.6 H1226.8 V364.5" fill="none"/></g><path d="M1222.3,368 V375.5 M1224.55,368 V375.5 M1226.8,368 V375.5" stroke="#000" stroke-width="1.1"/><path d="M1289.1,371.6 A6,6 0 1 1 1285.8,363.9" fill="none" stroke="#000" stroke-width="2.2"/><path d="M1284.3,360.3 L1291,363.2 L1285.5,367.6 Z" fill="#000"/><circle cx="1306.9" cy="369.8" r="7" fill="#000"/><circle cx="1306.9" cy="369.8" r="2" fill="#e01010"/><path d="M1326.8,362 V368.5" stroke="#000" stroke-width="2"/><path d="M1323,366.5 H1330.5 L1326.8,370.5 Z" fill="#000"/><rect x="1322.5" y="371.5" width="8.5" height="3" fill="#fff" stroke="#000" stroke-width="1"/><rect x="1319" y="374.5" width="16" height="2.5" fill="#000"/></svg><div class="t" style="left:1208.5px;top:343.5px;font-size:11px;color:#111">Как компонент</div><div class="t" style="left:1339.5px;top:364.5px;font-size:11px;color:#111">Верх</div><div class="a" style="left:1190px;top:383px;width:176px;height:31px;background:#e6e6e6;border-top:1px solid #9a9a9a;border-left:1px solid #9a9a9a"></div><div class="a" style="left:1190px;top:414px;width:176px;height:274px;background:#000"></div><div class="t" style="left:1251px;top:675px;font-size:11px;color:#d4d4d4">Нажать и перенести</div><div class="a" style="left:0;top:688px;width:1366px;height:40px;background:#f0f0f0"></div><div class="a" style="left:0;top:689px;width:1366px;height:1px;background:#a8a8a8"></div><div class="sb" style="left:3px;top:690px;width:84px;height:38px"></div><div class="t" style="left:8px;top:697px;font-size:11.5px;color:#222">X:</div><div class="t" style="left:8px;top:712px;font-size:11.5px;color:#222">Y:</div><div class="t" style="left:31px;top:697.3px;font-size:11px;color:#111">37,581 мм</div><div class="t" style="left:31px;top:712.3px;font-size:11px;color:#111">76,237 мм</div><div class="sb" style="left:90px;top:690px;width:183px;height:38px"></div><div class="a" style="left:139px;top:691px;width:120px;height:17.5px;background:#000"></div><div class="a" style="left:91px;top:708px;width:48px;height:1px;background:#a0a0a0"></div><div class="a" style="left:138px;top:691px;width:1px;height:37px;background:#a0a0a0"></div><div class="a" style="left:162px;top:709px;width:1px;height:19px;background:#a8a8a8"></div><div class="a" style="left:186px;top:709px;width:1px;height:19px;background:#a8a8a8"></div><div class="a" style="left:210px;top:709px;width:1px;height:19px;background:#a8a8a8"></div><div class="a" style="left:234px;top:709px;width:1px;height:19px;background:#a8a8a8"></div><div class="a" style="left:258px;top:709px;width:1px;height:19px;background:#a8a8a8"></div><div class="a" style="left:259px;top:691px;width:1px;height:37px;background:#fff"></div><div class="t" style="left:91.5px;top:694px;font-size:11.5px;color:#111;letter-spacing:-0.2px">видимая</div><div class="t" style="left:90px;top:713px;font-size:11.5px;color:#111;letter-spacing:-0.2px">активная</div><div class="t" style="left:142px;top:694.5px;font-size:12px;font-weight:bold;color:#2b6ce6">Ф1</div><div class="t" style="left:166px;top:694.5px;font-size:12px;font-weight:bold;color:#e01818">Ш1</div><div class="t" style="left:190px;top:694.5px;font-size:12px;font-weight:bold;color:#18b818">Ф2</div><div class="t" style="left:214px;top:694.5px;font-size:12px;font-weight:bold;color:#e0d820">Ш2</div><div class="t" style="left:240px;top:694.5px;font-size:12px;font-weight:bold;color:#f4f4f0">К</div><div class="t" style="left:264px;top:705px;font-size:11px;font-weight:bold;color:#222">?</div><div class="sb" style="left:278px;top:690px;width:37px;height:38px;border-right:none"></div><div class="sb" style="left:319px;top:690px;width:37px;height:38px;border-right:none"></div><div class="sb" style="left:360px;top:690px;width:37px;height:38px;border-right:none"></div><div class="a" style="left:273px;top:690px;width:1px;height:38px;background:#fff"></div><svg width="1366" height="768" viewBox="0 0 1366 768" style="left:0;top:0"><defs><radialGradient id="rg" cx="0.45" cy="0.35" r="0.7"><stop offset="0" stop-color="#ffffff"/><stop offset="1" stop-color="#d4d4d4"/></radialGradient><radialGradient id="rb" cx="0.4" cy="0.35" r="0.7"><stop offset="0" stop-color="#a8e0ff"/><stop offset="0.5" stop-color="#2a8ed0"/><stop offset="1" stop-color="#0a3a6a"/></radialGradient></defs><circle cx="148.9" cy="718.9" r="5.6" fill="url(#rg)" stroke="#8a8a8a" stroke-width="1"/><circle cx="172.9" cy="718.9" r="5.6" fill="url(#rg)" stroke="#8a8a8a" stroke-width="1"/><circle cx="172.9" cy="718.9" r="3.4" fill="url(#rb)"/><circle cx="196.9" cy="718.9" r="5.6" fill="url(#rg)" stroke="#8a8a8a" stroke-width="1"/><circle cx="220.9" cy="718.9" r="5.6" fill="url(#rg)" stroke="#8a8a8a" stroke-width="1"/><circle cx="244.9" cy="718.9" r="5.6" fill="url(#rg)" stroke="#8a8a8a" stroke-width="1"/><path d="M284,702.5 H292 L300,711" stroke="#9c9c9c" stroke-width="2.8" fill="none"/><circle cx="301" cy="713" r="2.7" fill="#fff" stroke="#9c9c9c" stroke-width="2.6"/><circle cx="337.6" cy="708.3" r="5.3" fill="none" stroke="#000" stroke-width="4.4"/><rect x="324" y="706" width="27" height="5" fill="#fff" opacity="0.0"/><rect x="336" y="695" width="3" height="27" fill="#fff"/><rect x="324" y="707" width="27" height="3" fill="#fff"/><rect x="336" y="695" width="1" height="27" fill="#d01010"/><rect x="338" y="695" width="1" height="27" fill="#d01010"/><rect x="324" y="707" width="27" height="1" fill="#d01010"/><rect x="324" y="709" width="27" height="1" fill="#d01010"/><path d="M366.5,715 C363,710 370,705 376,704 C381,703 385,700 388,699 C393,698 393,702 390,705 C387,709 381,711 377,713 C372,716 368,718 366.5,715 Z" fill="none" stroke="#505050" stroke-width="2.2"/><path d="M367,697 L390,720 M389,697 L367,720" stroke="#e01010" stroke-width="2"/></svg><div class="sb" style="left:401px;top:690px;width:965px;height:38px"></div><div class="t" style="left:408.5px;top:694px;font-size:11.1px;color:#1c1c6c">УКАЗКА: Выделение, перемещение, копирование, разделение, вырезка объектов</div><div class="a" style="left:407px;top:707px;width:945px;height:1px;background:#a8a8a8"></div><div class="a" style="left:0;top:728px;width:1366px;height:40px;background:linear-gradient(90deg,#141418 0,#1c1d22 4%,#33363e 10%,#2c2e34 15%,#40434c 20%,#4a4d5a 28%,#565968 40%,#5a5d6c 50%,#555866 62%,#525563 68%,#585b69 75%,#525563 82%,#4a4d5a 90%,#474a56 100%)"></div><div class="a" style="left:0;top:728px;width:1366px;height:40px;background:linear-gradient(rgba(255,255,255,0.06),rgba(255,255,255,0.02) 50%,rgba(0,0,0,0.0))"></div><svg width="1366" height="40" viewBox="0 728 1366 40" style="left:0;top:728px;overflow:hidden"><defs><filter id="bl" x="-20%" y="-50%" width="140%" height="200%"><feGaussianBlur stdDeviation="4"/></filter></defs><path d="M790,726 L830,726 Q855,738 880,741 Q915,738 948,726 L990,726 Q950,746 905,753 Q878,758 860,751 Q825,738 790,726 Z" fill="#141418" filter="url(#bl)" opacity="0.8"/></svg><div class="a" style="left:0;top:727px;width:1366px;height:1px;background:#ffffff"></div><div class="a" style="left:0;top:728px;width:1366px;height:1px;background:#303036"></div><div class="a" style="left:0;top:729px;width:1366px;height:1px;background:#a8abb4"></div><div class="tbb" style="left:60px;width:42px;background:linear-gradient(155deg,#8a8c92 0,#66686e 38%,#3c3e44 50%,#2c2e34 100%)"></div><div class="tbb" style="left:152px;width:42px;background:linear-gradient(155deg,#96989e 0,#74767c 38%,#4e5056 50%,#404248 100%)"></div><div class="tbb" style="left:290px;width:42px;background:linear-gradient(155deg,#9a9ca2 0,#76787e 38%,#54565e 50%,#4a4c54 100%)"></div><div class="tbb" style="left:336px;width:43px;background:linear-gradient(155deg,#f4f8f4 0,#d0e2d0 35%,#90b890 48%,#6aa06a 75%,#a0c8a0 100%)"></div><svg width="1366" height="768" viewBox="0 0 1366 768" style="left:0;top:0"><defs><linearGradient id="orb" x1="0" y1="0" x2="0" y2="1"><stop offset="0" stop-color="#d0dde6"/><stop offset="0.42" stop-color="#7a9ab4"/><stop offset="0.47" stop-color="#0c4a86"/><stop offset="0.8" stop-color="#1a8ad0"/><stop offset="1" stop-color="#2ee0ff"/></linearGradient></defs><circle cx="26.8" cy="747.9" r="18.8" fill="url(#orb)" stroke="#5a7a94" stroke-width="1.2"/><path d="M18.5,738 Q23,736 28.4,738.5 L27,746.5 Q22,744.5 17.5,746 Z" fill="#e8581e"/><path d="M29,739 Q33.5,741 38.8,739.5 L37.5,748 Q32.5,749.5 27.8,747.5 Z" fill="#72bc2a"/><path d="M17,747 Q21.5,745.5 26.6,747.5 L25.2,755.5 Q20.5,753.5 15.5,755.5 Z" fill="#2a9ae6"/><path d="M27.5,748.5 Q32,750.5 37.2,749 L35.8,757.5 Q31,759 26,757 Z" fill="#f6c21e"/><path d="M71,736 H77 L78.5,738 H88 V751 H71 Z" fill="#f0d070"/><path d="M73,744 H86 L84,752 H75 Z" fill="#50a8e0"/><rect x="119" y="735" width="16" height="15" fill="#7ab4e8"/><circle cx="127" cy="742.5" r="6" fill="#f08a18"/><path d="M125,739 L130,742.5 L125,746 Z" fill="#fff"/><circle cx="173" cy="743" r="8" fill="#e86818"/><circle cx="175" cy="741" r="4.5" fill="#2a5aa8"/><path d="M166,740 Q170,733 177,736 Q170,737 170,743" fill="#f8a830"/><rect x="212" y="737" width="13" height="13" rx="2" fill="#fafafa"/><path d="M214,748 L224,735 L227,737 L217,750 Z" fill="#8ac040"/><path d="M214,748 L217,750 L213,751 Z" fill="#e06030"/><rect x="259" y="735" width="12" height="16" fill="#cfe4f8" stroke="#5a9ad8" stroke-width="1"/><rect x="261" y="737" width="8" height="3" fill="#ffffff"/><path d="M261,743 H269 M261,746 H269 M261,749 H269" stroke="#5a9ad8" stroke-width="1.2"/><ellipse cx="305" cy="744" rx="8" ry="6" fill="#e8e4dc"/><circle cx="302" cy="742" r="1.5" fill="#e03030"/><circle cx="306" cy="740" r="1.5" fill="#30a030"/><circle cx="303" cy="746" r="1.5" fill="#3050d0"/><rect x="311" y="735" width="3" height="17" fill="#e8a030"/><circle cx="356" cy="745" r="7" fill="#14a014"/><rect x="353" y="734.5" width="6" height="5" fill="#14a014"/><rect x="361" y="742" width="5" height="6" fill="#14a014"/><circle cx="355" cy="745" r="1.6" fill="#eaffea"/><defs><radialGradient id="hq" cx="0.45" cy="0.35" r="0.7"><stop offset="0" stop-color="#2a5a9a"/><stop offset="0.7" stop-color="#0a2a5a"/><stop offset="1" stop-color="#3a8ad0"/></radialGradient></defs><circle cx="1129" cy="747.7" r="15.5" fill="url(#hq)"/><text x="1120.5" y="757.5" font-family="Liberation Sans" font-weight="bold" font-size="25" fill="#fff">?</text><path d="M1160,751 L1163.6,746.5 L1167.2,751 Z" fill="#e8e8e8"/><rect x="1180" y="742" width="15.5" height="15" rx="2" fill="#f09a20"/><circle cx="1188" cy="749.5" r="4.5" fill="#fff3c0"/><circle cx="1188" cy="749.5" r="2.5" fill="#e04010"/><rect x="1205" y="743" width="8" height="13" fill="none" stroke="#eee" stroke-width="1.6"/><path d="M1211,746 H1218 M1211,752 H1218 M1214,744 V754" stroke="#eee" stroke-width="1.6"/><rect x="1228.5" y="751.5" width="2" height="3" fill="#f0f0f0"/><rect x="1231.5" y="749.5" width="2" height="5" fill="#f0f0f0"/><rect x="1234.5" y="747.5" width="2" height="7" fill="#f0f0f0"/><rect x="1237.5" y="745.5" width="2" height="9" fill="#f0f0f0"/><rect x="1240.5" y="743.5" width="2" height="11" fill="#f0f0f0"/><path d="M1252.5,745.5 H1255.5 L1259.5,741.5 V756 L1255.5,752 H1252.5 Z" fill="#eee"/><path d="M1262,745 Q1264,748.5 1262,752 M1264.5,743 Q1267.5,748.5 1264.5,754" stroke="#ddd" stroke-width="1.2" fill="none"/><rect x="1352.5" y="729.5" width="13" height="38" fill="#6a6e78" stroke="#2a2c30" stroke-width="1"/></svg><div class="t" style="left:1085px;top:741px;font-size:11.5px;color:#e6e6e6">RU</div><div class="t" style="left:1299.5px;top:735.5px;font-size:11.5px;color:#f0f0f0">23:36</div><div class="t" style="left:1285px;top:752.5px;font-size:11.5px;color:#f0f0f0">11.08.2013</div>
</body></html>
